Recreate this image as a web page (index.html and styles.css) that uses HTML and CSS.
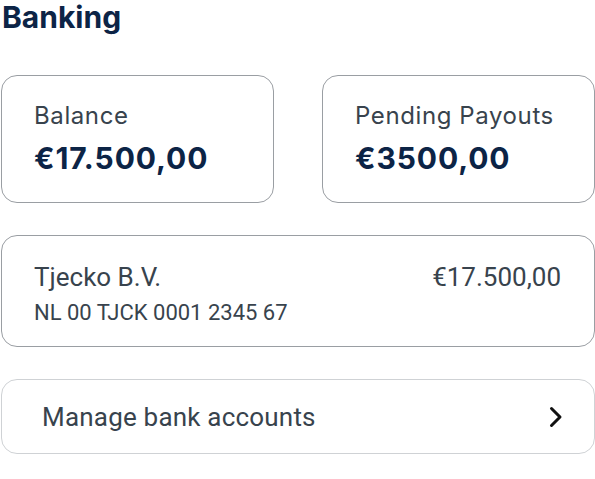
FILE: index.html
```html
<!DOCTYPE html>
<html>
<head>
<meta charset="utf-8">
<link rel="stylesheet" href="styles.css">
</head>
<body>
<main class="page">
  <h1 class="title">Banking</h1>
  <section class="stats">
    <div class="card stat">
      <div class="stat-label">Balance</div>
      <div class="stat-value">€17.500,00</div>
    </div>
    <div class="card stat">
      <div class="stat-label">Pending Payouts</div>
      <div class="stat-value">€3500,00</div>
    </div>
  </section>
  <section class="card account">
    <div class="account-row">
      <span class="account-name">Tjecko B.V.</span>
      <span class="account-amount">€17.500,00</span>
    </div>
    <div class="account-iban">NL 00 TJCK 0001 2345 67</div>
  </section>
  <a class="card manage" href="#">
    <span class="manage-text">Manage bank accounts</span>
    <svg class="chevron" width="16" height="24" viewBox="0 0 16 24" aria-hidden="true">
      <path d="M3.5 3.5 L12 12 L3.5 20.5" fill="none" stroke="#111" stroke-width="3" stroke-linecap="round" stroke-linejoin="round"/>
    </svg>
  </a>
</main>
</body>
</html>
```

FILE: styles.css
```css
* { box-sizing: border-box; }
html, body { margin: 0; padding: 0; background: #fff; }
body { font-family: Inter, "Noto Sans", sans-serif; }
.page { display: flex; flex-direction: column; padding: 0 0 0 1px; }
.title {
  margin: 0 0 0 1px;
  font-size: 30px;
  line-height: 34px;
  font-weight: 700;
  color: #0c2446;
}
.card {
  border: 1px solid #9a9ea3;
  border-radius: 16px;
  background: #fff;
}
.stats {
  display: grid;
  grid-template-columns: 273px 273px;
  column-gap: 48px;
  margin-top: 41px;
}
.stat { height: 128px; padding: 23px 0 0 32px; }
.stat-label { font-size: 24px; line-height: 34px; letter-spacing: 0.6px; color: #38434d; }
.stat-value { font-size: 30px; line-height: 40px; font-weight: 700; letter-spacing: 0.9px; color: #0c2446; margin-top: 5px; }
.account {
  margin-top: 32px;
  height: 112px;
  padding: 25px 33px 0 32px;
  font-family: Roboto, sans-serif;
  color: #38434d;
}
.account-row { display: flex; justify-content: space-between; align-items: baseline; }
.account-name, .account-amount { font-size: 26px; line-height: 32px; }
.account-iban { font-size: 22px; line-height: 28px; margin-top: 6px; }
.manage {
  margin-top: 32px;
  height: 75px;
  border-color: #cfd2d5;
  display: flex;
  align-items: center;
  justify-content: space-between;
  padding: 0 30px 0 40px;
  text-decoration: none;
  font-family: Roboto, sans-serif;
  color: #38434d;
}
.manage-text { font-size: 26px; letter-spacing: 0.2px; }
.chevron { display: block; }
```
